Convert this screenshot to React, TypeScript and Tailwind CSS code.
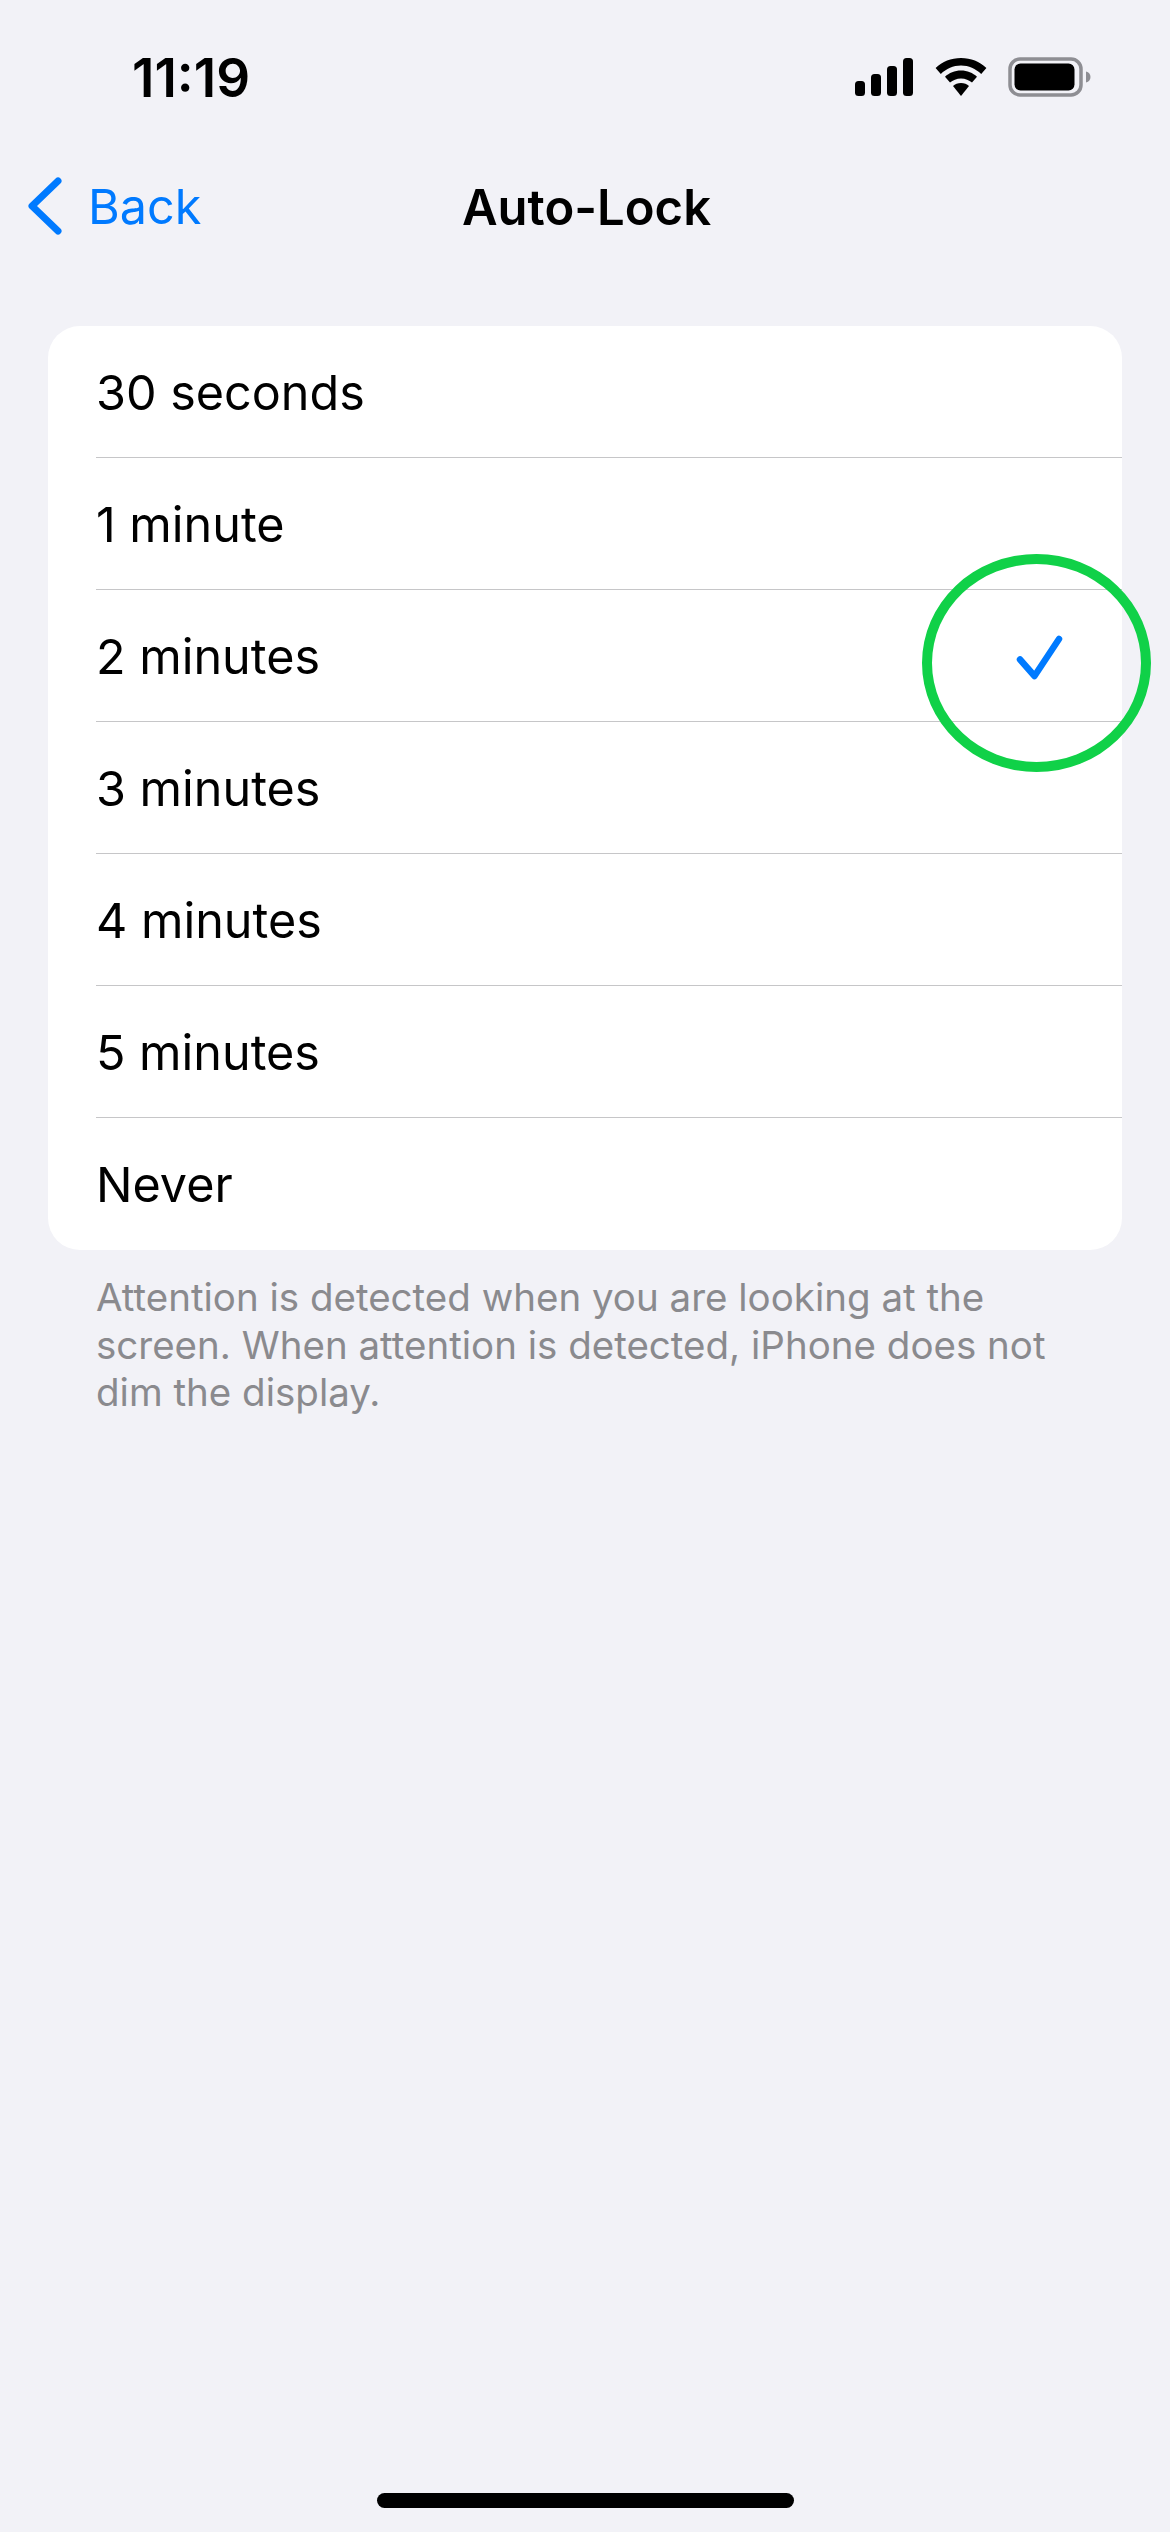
const FONT = "font-['Inter','Noto_Sans',sans-serif]";

const OPTIONS = ["30 seconds", "1 minute", "2 minutes", "3 minutes", "4 minutes", "5 minutes", "Never"];
const SELECTED = "2 minutes";

function StatusIcons() {
  return (
    <div className="flex items-center">
      <svg width="58" height="38" viewBox="0 0 58 38" className="mr-[22px]">
        <rect x="0" y="23" width="10" height="15" rx="3.5" fill="#000" />
        <rect x="16" y="16" width="10" height="22" rx="3.5" fill="#000" />
        <rect x="32" y="8" width="10" height="30" rx="3.5" fill="#000" />
        <rect x="48" y="0" width="10" height="38" rx="3.5" fill="#000" />
      </svg>
      <svg width="52" height="38" viewBox="0 0 52 38" className="mr-[21px]">
        <path d="M26 0C16 0 7.4 3.6 0.6 10l5.2 6C11.4 11 18.2 7.6 26 7.6S40.6 11 46.2 16l5.2-6C44.6 3.6 36 0 26 0Z" fill="#000" />
        <path d="M26 12.6c-6.4 0-11.8 2.4-16 6.2l5 5.8c2.9-2.5 6.6-4.2 11-4.2s8.1 1.7 11 4.2l5-5.8c-4.2-3.8-9.6-6.2-16-6.2Z" fill="#000" />
        <path d="M26 25c-3.2 0-6 1.1-8 2.9L26 38l8-10.1C32 26.1 29.2 25 26 25Z" fill="#000" />
      </svg>
      <svg width="83" height="40" viewBox="0 0 83 40">
        <rect x="2" y="2" width="71" height="36" rx="10" fill="none" stroke="#8e8e93" strokeWidth="3.5" />
        <rect x="6.5" y="6.5" width="60" height="27" rx="6" fill="#000" />
        <path d="M78 14.5c3 .8 4.5 3 4.5 5.5s-1.5 4.7-4.5 5.5Z" fill="#8e8e93" />
      </svg>
    </div>
  );
}

function OptionRow({ label, last }: { label: string; last: boolean }) {
  return (
    <div className="relative pl-[48px]">
      <div className={`flex items-center justify-between h-[132px] pr-[59px] ${last ? "" : "border-b-[1.5px] border-[#c6c6c8]"}`}>
        <span className="pt-[3px] text-[48.5px] text-black leading-none">{label}</span>
        {label === SELECTED && (
          <svg width="47" height="46" viewBox="0 0 47 46" fill="none" className="mt-[4px]">
            <path d="M4 24.5 L18.5 41 L43 4" stroke="#007aff" strokeWidth="6.5" strokeLinecap="round" strokeLinejoin="round" />
          </svg>
        )}
      </div>
    </div>
  );
}

export default function App() {
  return (
    <div className={`${FONT} relative flex flex-col w-[1170px] h-[2532px] bg-[#f2f2f7] overflow-hidden`}>
      <div className="flex items-center justify-between h-[78px] mt-[38px] pl-[132px] pr-[79px]">
        <span className="pt-[3px] text-[53px] font-semibold text-black leading-none">11:19</span>
        <StatusIcons />
      </div>

      <div className="relative flex items-center justify-center h-[94px] mt-[43px] pl-[3px]">
        <div className="absolute left-[28px] top-0 flex items-center h-full">
          <svg width="34" height="58" viewBox="0 0 34 58" fill="none">
            <path d="M30 4 L4 29 L30 54" stroke="#007aff" strokeWidth="7" strokeLinecap="round" strokeLinejoin="round" />
          </svg>
          <span className="ml-[26px] pt-[2px] text-[48.5px] text-[#007aff] leading-none">Back</span>
        </div>
        <span className="pt-[2px] text-[49px] font-semibold text-black leading-none">Auto-Lock</span>
      </div>

      <div className="relative mx-[48px] mt-[73px] w-[1074px] rounded-[32px] bg-white">
        {OPTIONS.map((o, i) => (
          <OptionRow key={o} label={o} last={i === OPTIONS.length - 1} />
        ))}
      </div>

      <p className="ml-[96px] mr-[80px] mt-[24px] text-[38.5px] leading-[47.5px] text-[#8a8a8e]">
        Attention is detected when you are looking at the screen. When attention is detected, iPhone does not dim the display.
      </p>

      <div className="mt-auto mb-[24px] self-center w-[417px] h-[15px] rounded-[8px] bg-black" />

      {/* green annotation ring over the selected row */}
      <div className="absolute left-[922px] top-[554px] w-[229px] h-[218px] rounded-[50%] border-[10px] border-[#10d148]" />
    </div>
  );
}
